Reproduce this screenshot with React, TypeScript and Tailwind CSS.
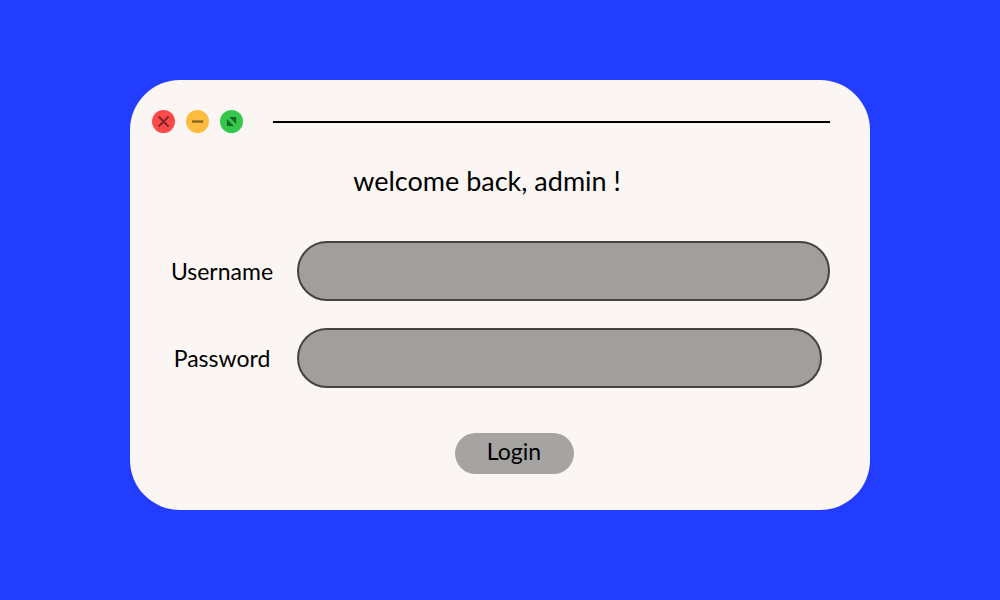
import React from "react";

const fieldClass =
  "h-15 w-full rounded-full border-2 border-[#444341] bg-[#a09f9d] px-7 text-[23px] text-black outline-none";

function WindowControls() {
  return (
    <div className="flex gap-[11px]">
      <button type="button" aria-label="Close" className="size-[23px] rounded-full bg-[#fc4a4a]">
        <svg viewBox="0 0 23 23" className="size-full" fill="none" stroke="#7f2826" strokeWidth="2.1">
          <path d="M6.6 6.6 16.6 16.6M16.6 6.6 6.6 16.6" />
        </svg>
      </button>
      <button type="button" aria-label="Minimize" className="size-[23px] rounded-full bg-[#fdbc40]">
        <svg viewBox="0 0 23 23" className="size-full" fill="none" stroke="#7f5e20" strokeWidth="2.2">
          <path d="M6 11.5H17.2" />
        </svg>
      </button>
      <button type="button" aria-label="Expand" className="size-[23px] rounded-full bg-[#34c84a]">
        <svg viewBox="0 0 23 23" className="size-full" fill="#1a6425">
          <path d="M9.2 7H16.2V14ZM6.9 9V16H13.9Z" />
        </svg>
      </button>
    </div>
  );
}

export default function App() {
  return (
    <main className="min-h-screen bg-[#223dff] px-[13%] py-20 font-['Lato',sans-serif] text-black">
      <section className="rounded-[50px] bg-[#fbf6f3] pt-[30px] pr-10 pb-9">
        <header className="flex items-center gap-[30px] pl-[22px]">
          <WindowControls />
          <div className="h-0.5 flex-1 bg-black" />
        </header>

        <h1 className="mt-[30px] pl-3.5 text-center text-[27px] leading-9">welcome back, admin !</h1>

        <form className="mt-[42px] pl-10" onSubmit={(event) => event.preventDefault()}>
          <div className="grid grid-cols-[104px_1fr] items-center gap-x-[23px] gap-y-[27px]">
            <label htmlFor="username" className="text-center text-[23px]">
              Username
            </label>
            <input id="username" name="username" type="text" autoComplete="username" className={fieldClass} />
            <label htmlFor="password" className="text-center text-[23px]">
              Password
            </label>
            <div className="pr-2">
              <input
                id="password"
                name="password"
                type="password"
                autoComplete="current-password"
                className={`${fieldClass} block`}
              />
            </div>
          </div>
          <div className="mt-[45px] flex justify-center pl-7">
            <button type="submit" className="h-[41px] w-[119px] rounded-full bg-[#a5a4a2] pb-1 text-[23px]">
              Login
            </button>
          </div>
        </form>
      </section>
    </main>
  );
}
